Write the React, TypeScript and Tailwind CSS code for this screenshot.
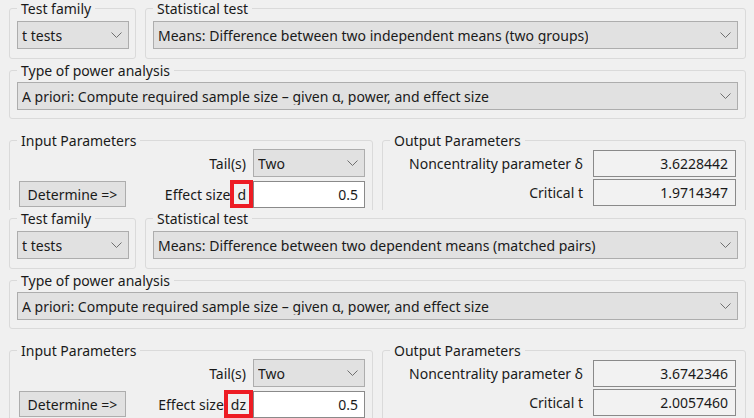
import React from 'react';

type BlockProps = {
  stat: string;
  eff: string;
  ncp: string;
  crit: string;
  height: string;
};

const Chevron = () => (
  <svg width="11" height="6" viewBox="0 0 11 6" className="shrink-0">
    <path d="M0.5 0.5 L5.5 5.5 L10.5 0.5" fill="none" stroke="#6f6f6f" strokeWidth="1" />
  </svg>
);

const Combo = ({ text, className = '' }: { text: string; className?: string }) => (
  <div
    className={`flex items-center justify-between h-[28px] bg-[#e1e1e1] border border-[#adadad] pl-[4px] pr-[6px] ${className}`}
  >
    <span className="truncate">{text}</span>
    <Chevron />
  </div>
);

const Group = ({
  label,
  className = '',
  children,
}: {
  label: string;
  className?: string;
  children: React.ReactNode;
}) => (
  <fieldset className={`border border-[#dadada] rounded-[3px] px-[7px] min-w-0 ${className}`}>
    <legend className="px-[4px] leading-[17px]">{label}</legend>
    {children}
  </fieldset>
);

const Block = ({ stat, eff, ncp, crit, height }: BlockProps) => (
  <div className={`${height} overflow-hidden pl-[9px] pr-[8px]`}>
    {/* test family + statistical test */}
    <div className="flex gap-[9px]">
      <Group label="Test family" className="w-[127px] pb-[9px] pr-[6px]">
        <Combo text="t tests" className="mt-[4px]" />
      </Group>
      <Group label="Statistical test" className="flex-1 pb-[9px]">
        <Combo text={stat} className="mt-[4px]" />
      </Group>
    </div>

    {/* type of power analysis */}
    <Group label="Type of power analysis" className="mt-[3px] pb-[8px]">
      <Combo text="A priori: Compute required sample size – given α, power, and effect size" className="mt-[3px]" />
    </Group>

    {/* input / output */}
    <div className="flex gap-[9px] mt-[13px]">
      <Group label="Input Parameters" className="w-[364px] pb-[20px]">
        <div className="flex items-center justify-end gap-[7px]">
          <span>Tail(s)</span>
          <Combo text="Two" className="w-[112px]" />
        </div>
        <div className="flex items-center mt-[3px]">
          <button className="ml-[2px] w-[107px] h-[26px] bg-[#e1e1e1] border border-[#adadad] leading-[17px]">
            Determine =&gt;
          </button>
          <div className="flex-1" />
          <span>Effect size</span>
          <span className="h-[28px] border-[4px] border-[#ed1c24] px-[3px] flex items-center leading-[17px]">
            {eff}
          </span>
          <div className="w-[112px] h-[27px] bg-white border border-[#8a8a8a] flex items-center justify-end pr-[6px]">
            0.5
          </div>
        </div>
      </Group>
      <Group label="Output Parameters" className="flex-1 pr-[9px] pb-[20px]">
        <div className="flex items-center justify-end gap-[10px] mt-[1px]">
          <span>Noncentrality parameter δ</span>
          <div className="w-[143px] h-[27px] bg-[#f2f2f2] border border-[#8a8a8a] flex items-center justify-end pr-[7px]">
            {ncp}
          </div>
        </div>
        <div className="flex items-center justify-end gap-[10px] mt-[2px]">
          <span>Critical t</span>
          <div className="w-[143px] h-[27px] bg-[#f2f2f2] border border-[#8a8a8a] flex items-center justify-end pr-[7px]">
            {crit}
          </div>
        </div>
      </Group>
    </div>
  </div>
);

export default function App() {
  return (
    <div className="w-[754px] h-[418px] overflow-hidden bg-[#f0f0f0] text-[#1a1a1a] text-[14px] leading-[17px] font-['Noto_Sans',sans-serif]">
      <Block
        height="h-[210px]"
        stat="Means: Difference between two independent means (two groups)"
        eff="d"
        ncp="3.6228442"
        crit="1.9714347"
      />
      <Block
        height="h-[208px]"
        stat="Means: Difference between two dependent means (matched pairs)"
        eff="dz"
        ncp="3.6742346"
        crit="2.0057460"
      />
    </div>
  );
}
